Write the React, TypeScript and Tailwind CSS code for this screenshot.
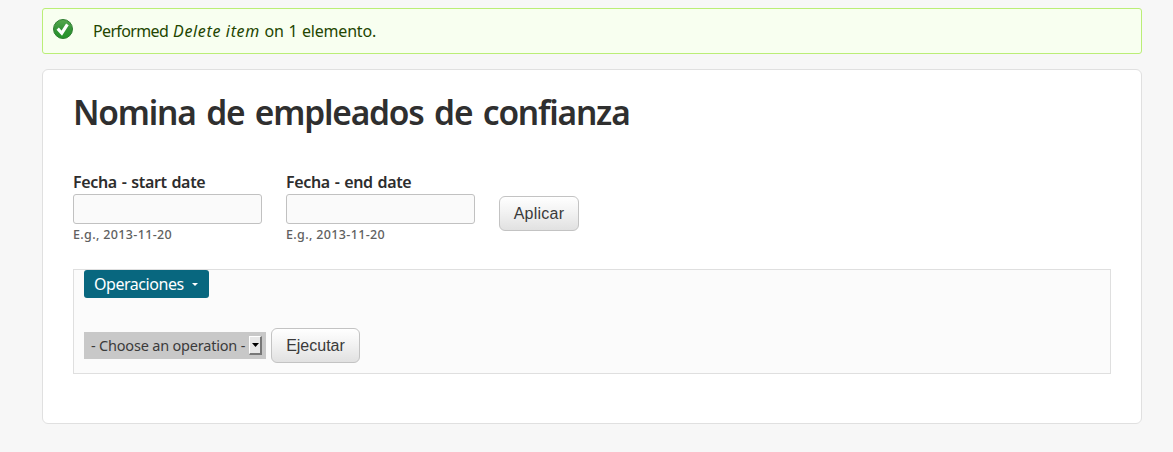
import React from "react";

const button =
  "h-[35px] rounded-[6px] border border-[#c3c3c3] bg-linear-to-b from-white from-0% via-[#f4f4f4] via-40% to-[#e1e1e1] font-['Liberation_Sans',sans-serif] leading-[33px] text-[#3a3a3a]";

function StatusIcon() {
  return (
    <svg className="mt-[9px] ml-[9px] size-[22px] shrink-0" viewBox="0 0 22 22">
      <defs>
        <linearGradient id="ok" x1="0" y1="0" x2="0" y2="1">
          <stop offset="0" stopColor="#56a94e" />
          <stop offset="0.5" stopColor="#359438" />
          <stop offset="1" stopColor="#249429" />
        </linearGradient>
      </defs>
      <circle cx="11" cy="11" r="9.5" fill="url(#ok)" stroke="#2f7d32" strokeWidth="1" />
      <path d="M5.7 10.6 L9.8 15.2 L15.4 6.3" fill="none" stroke="#fff" strokeWidth="3.1" />
    </svg>
  );
}

function DateField({ label }: { label: string }) {
  return (
    <div className="w-[189px]">
      <label className="block h-6 text-[16px] leading-6 font-semibold tracking-[-0.35px] whitespace-nowrap text-[#2d2d2d] [word-spacing:1px]">
        <span>{label}</span>
        <input
          aria-label={label}
          className="block h-[30px] w-[189px] rounded-[3px] border border-[#c1c1c1] bg-[#fafafa] px-2 outline-none"
        />
      </label>
      <div className="mt-[30px] h-[21px] text-[12.5px] leading-[21px] font-medium tracking-[0.35px] text-[#606060]">
        <span>E.g., 2013-11-20</span>
      </div>
    </div>
  );
}

export default function App() {
  return (
    <main className="h-[452px] w-[1173px] overflow-hidden bg-[#f7f7f7] pt-2 pl-[42px] font-['Noto_Sans',sans-serif]">
      <div className="flex h-[46px] w-[1100px] rounded-[3px] border border-[#be7] bg-[#f8fff0]">
        <StatusIcon />
        <p className="ml-[19px] text-[16px] leading-[44px] whitespace-nowrap text-[#234600]">
          <span className="tracking-[-0.65px] [word-spacing:1.5px]">Performed </span>
          <em className="tracking-[0.65px]">Delete item</em>
          <span className="tracking-[-0.2px] [word-spacing:0.7px]"> on 1 elemento.</span>
        </p>
      </div>
      <section className="mt-[15px] h-[355px] w-[1100px] rounded-[6px] border border-[#e0e0e0] bg-white px-[30px] pt-[17px]">
        <h1 className="text-[33.5px] leading-[50px] font-semibold tracking-[-1.2px] whitespace-nowrap text-[#2f2f2f] [word-spacing:3px]">
          <span>Nomina de empleados de confianza</span>
        </h1>
        <form className="mt-[33px] flex gap-6" onSubmit={(e) => e.preventDefault()}>
          <DateField label="Fecha - start date" />
          <DateField label="Fecha - end date" />
          <button className={`mt-[26px] w-[80px] text-[16px] tracking-[0.25px] ${button}`}>Aplicar</button>
        </form>
        <fieldset className="mt-[24px] h-[105px] w-[1038px] border border-[#dfdfdf] bg-[#fbfbfb] pl-[10px]">
          <div className="flex h-[28px] w-[125px] items-center rounded-[3px] bg-[#08677f] pl-[10px] text-[16px] text-white">
            <span className="tracking-[-0.45px]">Operaciones</span>
            <svg className="ml-[8px] h-[3px] w-[6px]" viewBox="0 0 6 3">
              <path d="M0 0H6L3 3Z" fill="#fff" />
            </svg>
          </div>
          <div className="mt-[30px] flex gap-[5px]">
            <div
              role="combobox"
              aria-expanded="false"
              className="mt-[4px] flex h-[27px] w-[182px] items-center justify-between bg-[#c8c8c8] pr-[4px] pl-[7px] text-[14.5px] whitespace-nowrap text-[#3b3b3b]"
            >
              <span className="tracking-[-0.2px]">- Choose an operation -</span>
              <span className="flex h-[19px] w-[13px] shrink-0 items-center justify-center border-t border-r-2 border-b-2 border-l border-t-white border-r-[#777] border-b-[#777] border-l-white bg-[#e8e8e8]">
                <svg className="h-[4px] w-[7px]" viewBox="0 0 7 4">
                  <path d="M0 0H7L3.5 4Z" fill="#000" />
                </svg>
              </span>
            </div>
            <button className={`w-[89px] text-[16px] ${button}`}>Ejecutar</button>
          </div>
        </fieldset>
      </section>
    </main>
  );
}
